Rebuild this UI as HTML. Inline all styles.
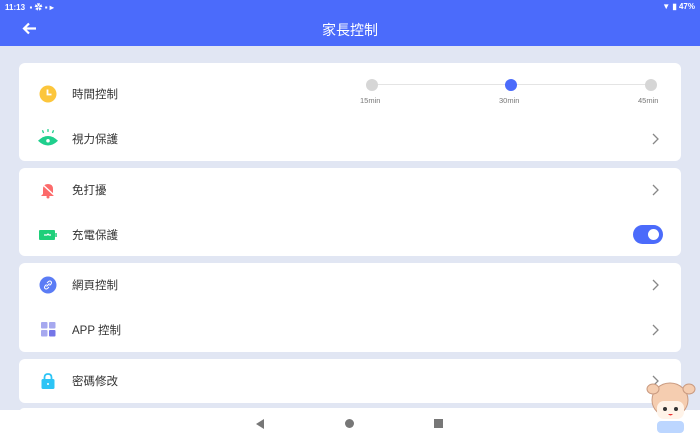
<!DOCTYPE html>
<html><head><meta charset="utf-8"><style>
*{margin:0;padding:0;box-sizing:border-box}
body{width:700px;height:437px;overflow:hidden;background:#e1e6f3;font-family:"Liberation Sans","Noto Sans CJK TC",sans-serif;position:relative}
.hdr{position:absolute;left:0;top:0;width:700px;height:46px;background:#4b6bfb;color:#fff}
.sb{position:absolute;top:2px;font-size:8px;font-weight:bold}
.title{position:absolute;top:20px;left:0;width:700px;text-align:center;font-size:14px}
.card{position:absolute;left:19px;width:662px;background:#fff;border-radius:6px}
.row{position:absolute;left:0;width:662px;height:20px}
.row .ic{position:absolute;left:20px;top:1px;width:18px;height:18px}
.row .t{position:absolute;left:53px;top:2px;font-size:11.5px;color:#333}
.chev{position:absolute;right:22px;top:4px;width:7px;height:12px}
.nav{position:absolute;left:0;top:410px;width:700px;height:27px;background:#fff}
</style></head><body>
<div class="hdr">
<div class="sb" style="left:5px">11:13 &nbsp;▪ ✿ ▪ ▸</div>
<div class="sb" style="right:5px">▼ ▮ 47%</div>
<svg style="position:absolute;left:22px;top:22px" width="15" height="13" viewBox="0 0 15 13"><path d="M14 6.5H2M7 1.5L2 6.5L7 11.5" stroke="#fff" stroke-width="2.2" fill="none"/></svg>
<div class="title">家長控制</div>
</div>

<div class="card" style="top:63px;height:98px">
 <div class="row" style="top:21px"><svg class="ic" viewBox="0 0 18 18"><circle cx="9" cy="9" r="8.5" fill="#fcc63c"/><path d="M8.5 4.5V9.5H12.5" stroke="#fff" stroke-width="1.8" fill="none"/></svg><div class="t">時間控制</div></div>
 <div style="position:absolute;left:353px;top:21px;width:279px;height:1px;background:#e4e4e4"></div>
 <div style="position:absolute;left:347px;top:16px;width:12px;height:12px;border-radius:50%;background:#d6d6d6"></div>
 <div style="position:absolute;left:486px;top:16px;width:12px;height:12px;border-radius:50%;background:#4b6bfb"></div>
 <div style="position:absolute;left:626px;top:16px;width:12px;height:12px;border-radius:50%;background:#d6d6d6"></div>
 <div style="position:absolute;left:341px;top:33px;font-size:7.5px;color:#777">15min</div>
 <div style="position:absolute;left:480px;top:33px;font-size:7.5px;color:#777">30min</div>
 <div style="position:absolute;left:619px;top:33px;font-size:7.5px;color:#777">45min</div>
 <div class="row" style="top:66px"><svg class="ic" style="left:19px;width:20px;height:20px;top:-1px" viewBox="0 0 18 18"><path d="M0 11.5Q9 3 18 11.5Q9 20 0 11.5Z" fill="#1fcf8d"/><circle cx="9" cy="11.5" r="1.6" fill="#fff"/><path d="M9 1V3.5M4 2L5 4.5M14 2L13 4.5" stroke="#1fcf8d" stroke-width="1.2"/></svg><div class="t">視力保護</div><svg class="chev" viewBox="0 0 7 12"><path d="M1 1L6 6L1 11" stroke="#888" stroke-width="1.3" fill="none"/></svg></div>
</div>

<div class="card" style="top:168px;height:88px">
 <div class="row" style="top:12px"><svg class="ic" viewBox="0 0 18 18"><path d="M4 13V8Q4 3 9 3Q14 3 14 8V13L16 15H2Z" fill="#fc6b6b"/><circle cx="9" cy="16" r="1.5" fill="#fc6b6b"/><path d="M3 3L16 15" stroke="#fff" stroke-width="1.5"/></svg><div class="t">免打擾</div><svg class="chev" viewBox="0 0 7 12"><path d="M1 1L6 6L1 11" stroke="#888" stroke-width="1.3" fill="none"/></svg></div>
 <div class="row" style="top:57px"><svg class="ic" viewBox="0 0 18 18"><rect x="0" y="4" width="16" height="10" rx="1" fill="#1fcf7a"/><rect x="16.3" y="7" width="1.5" height="4" fill="#1fcf7a"/><path d="M5 9H8L9 8L10 9H12" stroke="#fff" stroke-width="1.2" fill="none"/></svg><div class="t">充電保護</div>
 <div style="position:absolute;right:18px;top:0;width:30px;height:19px;border-radius:10px;background:#4b6bfb"><div style="position:absolute;right:4px;top:4px;width:11px;height:11px;border-radius:50%;background:#fff"></div></div></div>
</div>

<div class="card" style="top:263px;height:89px">
 <div class="row" style="top:12px"><svg class="ic" viewBox="0 0 18 18"><circle cx="9" cy="9" r="8.5" fill="#5b7cf5"/><path d="M7.5 10.5L10.5 7.5M8 7L9.5 5.5Q11 4.5 12 5.5Q13 6.5 12 8L10.5 9.5M10 11L8.5 12.5Q7 13.5 6 12.5Q5 11.5 6 10L7.5 8.5" stroke="#fff" stroke-width="1" fill="none"/></svg><div class="t">網頁控制</div><svg class="chev" viewBox="0 0 7 12"><path d="M1 1L6 6L1 11" stroke="#888" stroke-width="1.3" fill="none"/></svg></div>
 <div class="row" style="top:57px"><svg class="ic" viewBox="0 0 18 18"><rect x="2" y="1" width="6.5" height="6.5" rx="1" fill="#a6a8ef"/><rect x="10" y="1" width="6.5" height="6.5" rx="1" fill="#a6a8ef"/><rect x="2" y="9" width="6.5" height="6.5" rx="1" fill="#a6a8ef"/><rect x="10" y="9" width="6.5" height="6.5" rx="1" fill="#7476e8"/></svg><div class="t">APP 控制</div><svg class="chev" viewBox="0 0 7 12"><path d="M1 1L6 6L1 11" stroke="#888" stroke-width="1.3" fill="none"/></svg></div>
</div>

<div class="card" style="top:359px;height:44px">
 <div class="row" style="top:12px"><svg class="ic" viewBox="0 0 18 18"><path d="M5.5 8V5.5Q5.5 2 9 2Q12.5 2 12.5 5.5V8" stroke="#2cc4f5" stroke-width="1.8" fill="none"/><rect x="2.5" y="7" width="13" height="10" rx="1.5" fill="#2cc4f5"/><circle cx="9" cy="12" r="1" fill="#fff"/></svg><div class="t">密碼修改</div><svg class="chev" viewBox="0 0 7 12"><path d="M1 1L6 6L1 11" stroke="#888" stroke-width="1.3" fill="none"/></svg></div>
</div>
<div class="card" style="top:408px;height:10px"></div>

<div class="nav">
<svg style="position:absolute;left:256px;top:9px" width="9" height="10"><path d="M8 0V10L0 5Z" fill="#777"/></svg>
<div style="position:absolute;left:345px;top:9px;width:9px;height:9px;border-radius:50%;background:#777"></div>
<div style="position:absolute;left:434px;top:9px;width:9px;height:9px;background:#777"></div>
</div>
<svg style="position:absolute;left:645px;top:375px" width="55" height="62" viewBox="0 0 55 62"><ellipse cx="25" cy="25" rx="18" ry="17" fill="#f5cdb0" stroke="#c99a80"/><ellipse cx="8" cy="14" rx="6" ry="5" fill="#f5cdb0" stroke="#c99a80"/><ellipse cx="44" cy="14" rx="6" ry="5" fill="#f5cdb0" stroke="#c99a80"/><rect x="12" y="26" width="27" height="18" rx="7" fill="#fff3e8"/><circle cx="20" cy="34" r="2" fill="#333"/><circle cx="31" cy="34" r="2" fill="#333"/><path d="M23 39Q25.5 42 28 39" fill="#e33"/><rect x="12" y="46" width="27" height="12" rx="4" fill="#bcd6ff"/></svg>
</body></html>
